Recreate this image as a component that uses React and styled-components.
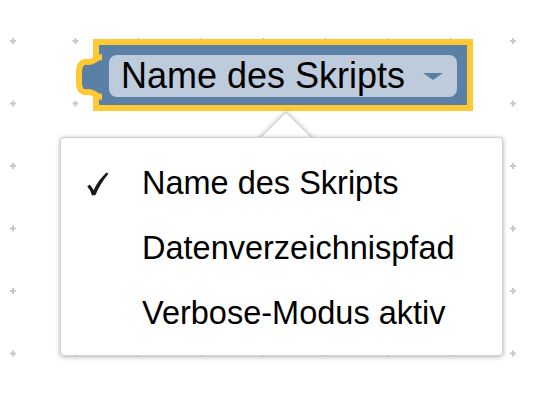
import React from 'react';
import styled, { createGlobalStyle } from 'styled-components';

const Global = createGlobalStyle`
  html, body { margin: 0; padding: 0; background: #fff; }
  body { font-family: "Liberation Sans", Arial, Helvetica, sans-serif; }
`;

const Workspace = styled.div`
  position: relative;
  width: 538px;
  height: 394px;
  overflow: hidden;
  background: #fff;
`;

const GridLayer = styled.svg`
  position: absolute;
  inset: 0;
  width: 100%;
  height: 100%;
`;

const Content = styled.div`
  position: relative;
  display: flex;
  flex-direction: column;
  padding-top: 39px;
`;

const Block = styled.div`
  position: relative;
  box-sizing: border-box;
  margin-left: 93px;
  width: 380px;
  height: 72px;
  padding: 10px;
  border: 6px solid #fec935;
  background: #5b80a5;
`;

const Tab = styled.svg`
  position: absolute;
  left: -30px;
  top: 8px;
  width: 40px;
  height: 48px;
  overflow: visible;
`;

const Field = styled.div`
  position: relative;
  display: flex;
  align-items: center;
  gap: 12px;
  box-sizing: border-box;
  width: 348px;
  height: 42px;
  padding: 0 14px 0 12px;
  border-radius: 8px;
  background: #bdcbdc;
  color: #000;
  font-size: 36px;
  line-height: 1;
  white-space: nowrap;
`;

const Caret = styled.span`
  margin-left: auto;
  width: 0;
  height: 0;
  border-left: 10px solid transparent;
  border-right: 10px solid transparent;
  border-top: 7px solid #5b80a5;
`;

const Menu = styled.div`
  position: relative;
  margin-top: 26px;
  margin-left: 60px;
  width: 443px;
`;

const Pointer = styled.div`
  position: absolute;
  left: 205px;
  top: -17px;
  width: 40px;
  height: 40px;
  background: #fff;
  border: 1px solid rgba(0, 0, 0, 0.18);
  border-radius: 3px;
  box-shadow: 0 0 5px rgba(0, 0, 0, 0.25);
  transform: rotate(45deg);
`;

const Panel = styled.ul`
  position: relative;
  z-index: 1;
  box-sizing: border-box;
  height: 219px;
  margin: 0;
  padding: 13px 0 11px;
  list-style: none;
  background: #fff;
  border: 1px solid rgba(0, 0, 0, 0.18);
  border-radius: 4px;
  box-shadow: 0 1px 5px rgba(0, 0, 0, 0.3);
`;

const Item = styled.li`
  display: flex;
  align-items: center;
  height: 65px;
  color: #000;
  font-size: 32.5px;
  white-space: nowrap;
`;

const CheckCell = styled.span`
  display: flex;
  align-items: center;
  box-sizing: border-box;
  width: 81px;
  padding-left: 25px;
  visibility: ${p => (p.$on ? 'visible' : 'hidden')};
`;

const CheckMark = () => (
  <svg width="23" height="24" viewBox="0 0 23 24">
    <path
      d="M20.5 0.5 L22.5 1.8 C17 8 12.5 16 9.5 23 L6 23.6 C5 20 3.5 17 1.3 14.6 L3.6 12.6 C5 14 6.5 16 7.5 18.3 C11 11 15.5 5 20.5 0.5 Z"
      fill="#1a1a1a"
    />
  </svg>
);

const items = ['Name des Skripts', 'Datenverzeichnispfad', 'Verbose-Modus aktiv'];

const Grid = () => {
  const xs = [], ys = [];
  for (let i = 0; i < 9; i++) xs.push(13 + i * 62.5);
  for (let j = 0; j < 7; j++) ys.push(41 + j * 62.5);
  return (
    <GridLayer>
      {ys.map(y =>
        xs.map(x => (
          <g key={`${x}-${y}`} fill="#c9c9c9">
            <rect x={x - 3} y={y - 1} width="6" height="2" />
            <rect x={x - 1} y={y - 3} width="2" height="6" />
          </g>
        ))
      )}
    </GridLayer>
  );
};

const App = () => (
  <>
    <Global />
    <Workspace>
      <Grid />
      <Content>
        <Block>
          <Tab viewBox="0 0 40 48">
            <path
              d="M33 4 C26 4 25 10 19 9 C13 8 10 12 10 19 L10 30 C10 37 13 40 19 39 C25 38 26 44 33 44 L40 44 L40 4 Z"
              fill="#5b80a5"
            />
            <path
              d="M33 4 C26 4 25 10 19 9 C13 8 10 12 10 19 L10 30 C10 37 13 40 19 39 C25 38 26 44 33 44"
              fill="none"
              stroke="#fec935"
              strokeWidth="6"
            />
          </Tab>
          <Field>
            <span>Name des Skripts</span>
            <Caret />
          </Field>
        </Block>
        <Menu>
          <Pointer />
          <Panel>
            {items.map((t, i) => (
              <Item key={t}>
                <CheckCell $on={i === 0}>
                  <CheckMark />
                </CheckCell>
                {t}
              </Item>
            ))}
          </Panel>
        </Menu>
      </Content>
    </Workspace>
  </>
);

export default App;
